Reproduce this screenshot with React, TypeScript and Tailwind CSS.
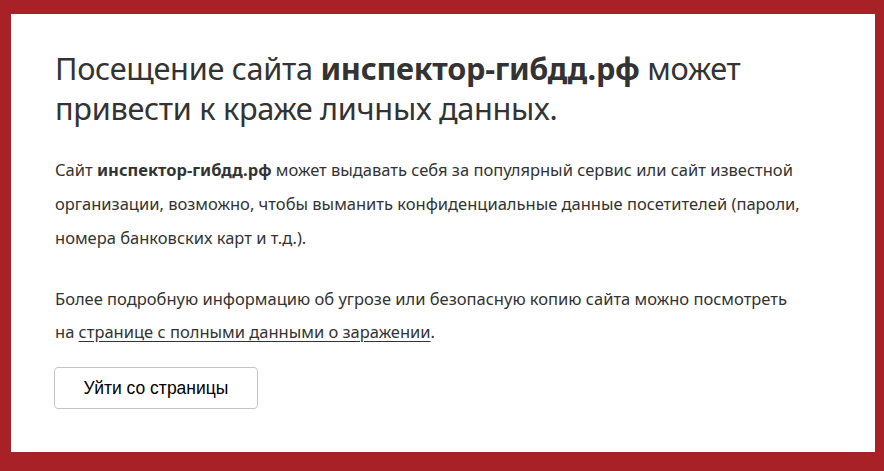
import React from 'react';

export default function App() {
  return (
    <div className="w-[884px] h-[471px] bg-[#a82127] pt-[14px] pl-[11px] font-['Noto_Sans',sans-serif] text-[#333]">
      <div className="w-[864px] h-[438px] bg-white px-[44px] pt-[34px]">
        {/* Heading */}
        <h1 className="text-[30.7px] leading-[40px] font-normal tracking-[-0.3px]">
          Посещение сайта <b className="font-bold">инспектор-гибдд.рф</b> может
          <br />
          привести к краже личных данных.
        </h1>

        {/* Description */}
        <p className="mt-[25px] text-[16.5px] leading-[34px]">
          Сайт <b className="font-bold">инспектор-гибдд.рф</b> может выдавать себя за популярный сервис или сайт известной
          <br />
          организации, возможно, чтобы выманить конфиденциальные данные посетителей (пароли,
          <br />
          номера банковских карт и т.д.).
        </p>

        <p className="mt-[27px] text-[16.5px] leading-[33px]">
          Более подробную информацию об угрозе или безопасную копию сайта можно посмотреть
          <br />
          на{' '}
          <a href="#" className="underline underline-offset-[3px] decoration-[#333]">
            странице с полными данными о заражении
          </a>
          .
        </p>

        <button className="mt-[19px] -ml-px w-[204px] h-[42px] border border-[#c4c4c4] rounded-[4px] bg-white text-black text-[17.5px] font-['Liberation_Sans',Arial,sans-serif]">
          Уйти со страницы
        </button>
      </div>
    </div>
  );
}
